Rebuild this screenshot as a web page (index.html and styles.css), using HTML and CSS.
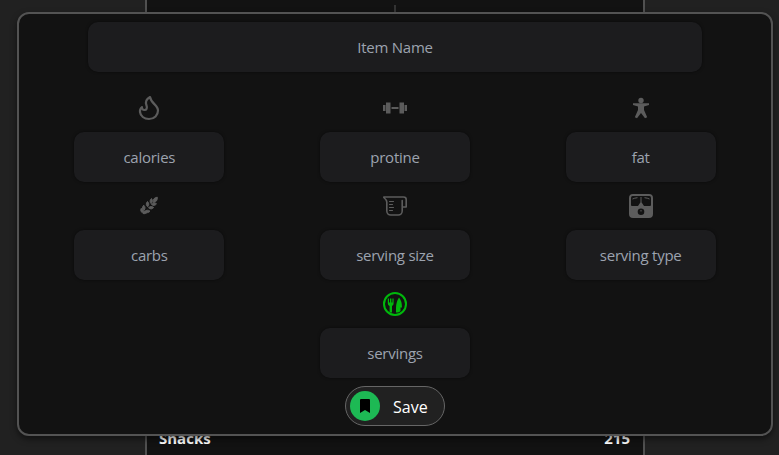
FILE: index.html
```
<!DOCTYPE html>
<html lang="en">
<head>
<meta charset="utf-8">
<title>Add item</title>
<link rel="stylesheet" href="styles.css">
</head>
<body>
<main class="diary">
  <div class="tick"></div>
  <div class="meal"><span>Snacks</span><span>215</span></div>
</main>
<form class="dialog">
  <div class="field name">Item Name</div>
  <div class="grid">
    <div class="cell">
      <svg class="icon flame" viewBox="0 0 24 24"><path d="M13 1C8.500 3.500 8.500 7 9.500 9.500C10.500 12 9.500 14 7.500 14C5.500 14 4.800 12.500 5 11C3.200 12.500 2.800 14.500 3 16C3.500 20 7 23 12 23C17.500 23 21 19 21 14.500C21 9 14 7.500 13 1z"/></svg>
      <div class="field">calories</div>
    </div>
    <div class="cell">
      <svg class="icon" viewBox="0 0 24 24"><path d="M0 9h2.500v6H0zM3 6.500h4.500v11H3zM8.500 11h7v2h-7zM16.500 6.500H21v11h-4.500zM21.500 9H24v6h-2.500z"/></svg>
      <div class="field">protine</div>
    </div>
    <div class="cell">
      <svg class="icon" viewBox="0 0 24 24"><circle cx="12" cy="4.500" r="2.700"/><path d="M4 7.300h16v1.700l-5 1.600v3.500l3.200 7.100-2.200 1L12 17l-4 5.200-2.200-1L9 14.100v-3.500L4 9z"/></svg>
      <div class="field">fat</div>
    </div>
    <div class="cell">
      <svg class="icon wheat" viewBox="0 0 24 24"><path d="M20.300 3.200c.2 3-1 5.100-4.100 5.300-.4-3.100 1-5 4.100-5.300zM14.500 4.500c1.300 1.700 1 3.700-.3 5.200-1.600-1.600-1.500-3.600.3-5.200zM10.500 7.500c1.600 1.600 1.800 3.400.2 5.300-1.900-1.500-1.900-3.500-.2-5.300zM6.700 11.200c1.600 1.500 1.800 3.400.3 5.200-1.900-1.400-2.100-3.400-.3-5.200zM19.500 9.800c-1.400 1.900-3.200 2.100-5 .7 1.500-1.700 3.300-1.900 5-.7zM16.700 13.500c-1.500 1.800-3.300 1.900-5.200.2 1.700-1.500 3.500-1.600 5.200-.2zM13 17.200c-1.500 1.800-3.400 1.900-5.300.2 1.700-1.500 3.500-1.600 5.300-.2zM4 14.500c1.600.5 2.500 1.500 2.600 3 1.300-.4 2.500 0 3.400 1.200-2.300 1.500-4 1.300-4.800-.1C3.900 17.800 3.500 16.500 4 14.500z"/></svg>
      <div class="field">carbs</div>
    </div>
    <div class="cell">
      <svg class="icon line thin" viewBox="0 0 24 24"><path d="M.8 3h19.700q2.700 0 2.700 2.500V13h-4V6.500v10.500a4 4 0 0 1-4 4H7.800a4 4 0 0 1-4-4V8Q3.800 6 .8 3.500z"/><path class="marks" d="M6.500 7.500h4M6.500 10.500h3M6.500 13.500h4M6.500 16.500h3"/></svg>
      <div class="field">serving size</div>
    </div>
    <div class="cell">
      <svg class="icon" viewBox="0 0 24 24"><path fill-rule="evenodd" d="M4 0h16q4 0 4 4v16q0 4-4 4H4q-4 0-4-4V4q0-4 4-4zM3.500 2q-1.500 0-1.500 2V11q0 1 1 1h6l3-4.500 3 4.500h6q1 0 1-1V4q0-2-1.500-2zM12 14.500a3.300 3.300 0 1 0 0 6.600 3.300 3.300 0 0 0 0-6.600z"/><path d="M3.500 5q2-1 5-1.300M15.500 3.700q3 .3 5 1.300M12 3v5M12 16v1.500" fill="none" stroke="currentColor" stroke-width="1"/></svg>
      <div class="field">serving type</div>
    </div>
    <div class="cell middle">
      <svg class="icon green" viewBox="0 0 24 24"><circle cx="12" cy="12" r="11" fill="none" stroke="currentColor" stroke-width="2"/><path d="M4.800 6.500h1.200v4h1v-4h1.400v4h1v-4h1.200v5q0 1.900-1.600 2.500v6.500H6.600V14q-1.800-.6-1.800-2.500zM16 5.500q3 3.500 3 10h-1.500v3.500q-1.500 1.500-3 1.500H13V16q0-6 3-10.500z"/></svg>
      <div class="field">servings</div>
    </div>
  </div>
  <button class="save" type="button">
    <span class="mark"><svg viewBox="0 0 10 14"><path d="M0 1q0-1 1-1h8q1 0 1 1v13l-5-3-5 3z"/></svg></span>
    <span class="label">Save</span>
  </button>
</form>
</body>
</html>
```
FILE: styles.css
```
* { box-sizing: border-box; }
body {
  margin: 0;
  height: 455px;
  overflow: hidden;
  background: #212121;
  font-family: "Open Sans", "Noto Sans", sans-serif;
}
.diary {
  width: 500px;
  height: 455px;
  margin-left: 145px;
  padding-top: 5px;
  border: solid #505050;
  border-width: 0 2px;
  background: #121212;
  display: flex;
  flex-direction: column;
  justify-content: space-between;
}
.tick { width: 2px; height: 12px; margin-left: 247px; background: #333; }
.meal {
  display: flex;
  justify-content: space-between;
  padding: 0 13px 7px 12px;
  color: #fff;
  font-size: 15px;
  font-weight: 700;
  line-height: 20px;
}
.dialog {
  position: absolute;
  left: 17px;
  top: 12px;
  width: 756px;
  height: 424px;
  padding: 8px;
  border: 2px solid #535353;
  border-radius: 12px;
  background: #121212;
  box-shadow: 0 3px 6px rgba(0, 0, 0, .5);
  display: flex;
  flex-direction: column;
  align-items: center;
}
.field {
  width: 150px;
  height: 50px;
  border-radius: 10px;
  background: #1c1c1e;
  box-shadow: 0 0 3px rgba(0, 0, 0, .5);
  color: #9ca3af;
  font-size: 15px;
  letter-spacing: -.25px;
  line-height: 50px;
  text-align: center;
}
.name { width: 614px; flex: none; }
.grid {
  width: 737px;
  display: grid;
  grid-template-columns: repeat(3, 1fr);
}
.cell {
  height: 98px;
  padding-top: 24px;
  display: flex;
  flex-direction: column;
  align-items: center;
  gap: 12px;
}
.middle { grid-column: 2; }
.icon { width: 24px; height: 24px; flex: none; color: #5c5c5c; fill: currentColor; overflow: visible; }
.line, .flame { fill: none; stroke: currentColor; stroke-width: 2.2; stroke-linejoin: round; stroke-linecap: round; }
.thin { stroke-width: 1.6; }
.marks { stroke-width: 1.2; }
.wheat { stroke: currentColor; stroke-width: 1; }
.green { color: #00b80c; }
.save {
  width: 100px;
  height: 40px;
  margin-top: 20px;
  padding: 0 0 0 4px;
  border: 1px solid #666;
  border-radius: 20px;
  background: #212121;
  color: #fff;
  font: 16px "Open Sans", "Noto Sans", sans-serif;
  display: flex;
  align-items: center;
  gap: 13px;
  flex: none;
}
.label { padding-top: 2px; }
.mark {
  width: 30px;
  height: 30px;
  border-radius: 50%;
  background: #1db954;
  display: grid;
  place-items: center;
}
.mark svg { width: 10px; height: 14px; fill: #000; display: block; }
```
